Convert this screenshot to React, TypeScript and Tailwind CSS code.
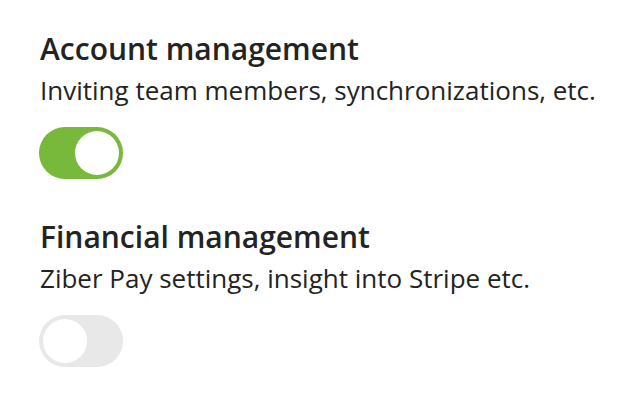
const items = [
  { title: "Account management", desc: "Inviting team members, synchronizations, etc.", on: true },
  { title: "Financial management", desc: "Ziber Pay settings, insight into Stripe etc.", on: false },
];

function Toggle({ on }: { on: boolean }) {
  return (
    <div
      className={
        on
          ? "flex h-[52px] w-[84px] items-center justify-end rounded-full bg-[#78b83a] p-[4px]"
          : "flex h-[52px] w-[84px] items-center justify-start rounded-full bg-[#e8e8e8] p-[4px]"
      }
    >
      <div className="h-[44px] w-[44px] rounded-full bg-white" />
    </div>
  );
}

export default function App() {
  return (
    <div className="flex min-h-[400px] w-[634px] flex-col gap-[38px] bg-white pl-[39px] pt-[29px] font-['Open_Sans',sans-serif] text-[#232323]">
      {items.map((it) => (
        <div key={it.title} className="flex flex-col">
          <h2 className="pl-px text-[30px] font-semibold leading-[40px]">{it.title}</h2>
          <p className="mt-[3px] pl-px text-[26px] leading-[36px]">{it.desc}</p>
          <div className="mt-[19px]">
            <Toggle on={it.on} />
          </div>
        </div>
      ))}
    </div>
  );
}
